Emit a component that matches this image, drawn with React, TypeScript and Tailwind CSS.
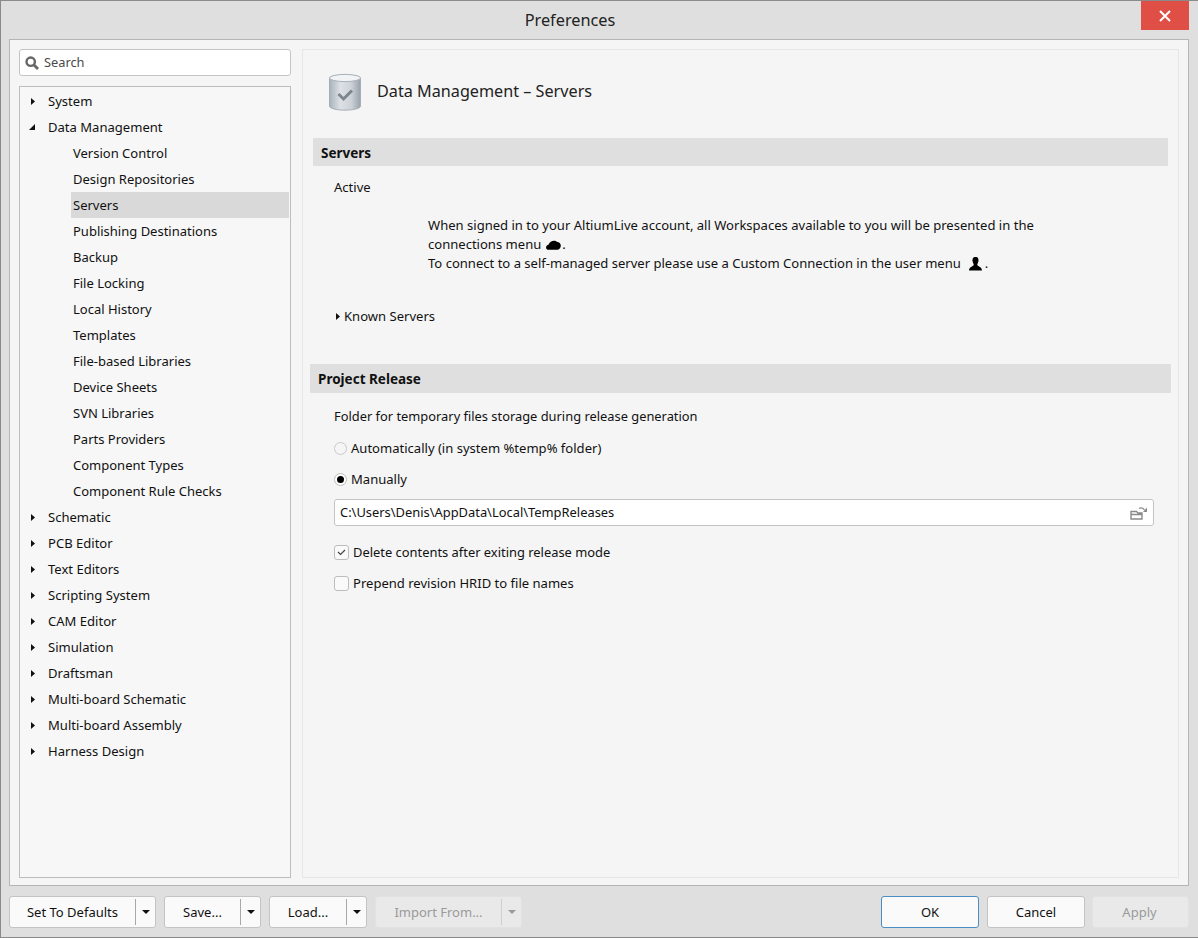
import React from "react";

const font = { fontFamily: '"Noto Sans", "Open Sans", sans-serif' };

function TreeRow({ label, level = 0, arrow, selected }: { label: string; level?: number; arrow?: "right" | "down"; selected?: boolean }) {
  return (
    <div className="flex h-[26px] items-center">
      {level === 0 ? (
        <>
          <span className="flex w-[28px] justify-end pr-[13px]">
            {arrow === "right" ? (
              <svg width="4" height="7" viewBox="0 0 4 7"><path d="M0 0L4 3.5L0 7Z" fill="#111" /></svg>
            ) : (
              <svg width="6" height="6" viewBox="0 0 6 6"><path d="M6 0V6H0Z" fill="#111" /></svg>
            )}
          </span>
          <span className="pt-[1px] text-[13.05px] text-[#111]">{label}</span>
        </>
      ) : (
        <div className={`ml-[51px] flex h-[26px] w-[218px] items-center pl-[2px] pt-[1px] text-[13px] text-[#111] ${selected ? "bg-[#d9d9d9]" : ""}`}>{label}</div>
      )}
    </div>
  );
}

function SplitButton({ label, width, disabled }: { label: string; width: string; disabled?: boolean }) {
  return (
    <div className={`flex h-[32px] items-center rounded-[3px] border ${width} ${disabled ? "border-[#e2e2e2] bg-[#e9e9e9] text-[#9a9a9a]" : "border-[#c4c4c4] bg-[#fafafa] text-[#111]"}`}>
      <span className="flex-1 pt-[1px] text-center text-[13px]">{label}</span>
      <span className={`h-[26px] w-px ${disabled ? "bg-[#cfcfcf]" : "bg-[#a8a8a8]"}`} />
      <span className="flex w-[19px] justify-center">
        <svg width="8" height="4" viewBox="0 0 8 4"><path d="M0 0H8L4 4Z" fill={disabled ? "#9a9a9a" : "#111"} /></svg>
      </span>
    </div>
  );
}

export default function App() {
  const sub = ["Version Control", "Design Repositories", "Servers", "Publishing Destinations", "Backup", "File Locking", "Local History", "Templates", "File-based Libraries", "Device Sheets", "SVN Libraries", "Parts Providers", "Component Types", "Component Rule Checks"];
  const after = ["Schematic", "PCB Editor", "Text Editors", "Scripting System", "CAM Editor", "Simulation", "Draftsman", "Multi-board Schematic", "Multi-board Assembly", "Harness Design"];
  return (
    <div style={font} className="flex h-[938px] w-[1198px] flex-col overflow-hidden border-t border-b border-l border-[#8a8a8a] bg-[#dfdfdf] text-[#111]">
      <div className="flex h-[38px] shrink-0 items-start">
        <div className="flex h-[38px] flex-1 items-center justify-center pr-[2px] text-[16.3px] text-[#222]">Preferences</div>
        <div className="mr-[9px] flex h-[29px] w-[48px] items-center justify-center bg-[#e04f45]">
          <svg width="12" height="12" viewBox="0 0 12 12"><path d="M1 1L11 11M11 1L1 11" stroke="#fff" strokeWidth="2" /></svg>
        </div>
      </div>

      <div className="ml-[8px] mr-[9px] flex h-[847px] shrink-0 gap-[11px] border border-[#b5b5b5] bg-[#f5f5f5] pt-[9px] pr-[9px] pb-[7px] pl-[9px]">
        <div className="flex w-[272px] shrink-0 flex-col gap-[10px]">
          <div className="flex h-[27px] items-center rounded-[3px] border border-[#c4c4c4] bg-white pl-[5px] text-[12.8px] text-[#4a4a4a]">
            <svg width="14" height="14" viewBox="0 0 14 14" className="mr-[5px]">
              <circle cx="5.7" cy="5.7" r="4.2" fill="none" stroke="#666" strokeWidth="2.4" />
              <path d="M9 9L13 13" stroke="#666" strokeWidth="2.8" />
            </svg>
            Search
          </div>
          <div className="flex-1 border border-[#bdbdbd] bg-[#f7f7f7] pt-[1px]">
            <TreeRow label="System" arrow="right" />
            <TreeRow label="Data Management" arrow="down" />
            {sub.map((s) => (
              <TreeRow key={s} label={s} level={1} selected={s === "Servers"} />
            ))}
            {after.map((s) => (
              <TreeRow key={s} label={s} arrow="right" />
            ))}
          </div>
        </div>

        <div className="flex-1 border border-[#e6e6e6] bg-[#f5f5f5] text-[13.05px]">
          <div className="flex h-[88px] items-start pl-[25px] pt-[22px]">
            <svg width="34" height="40" viewBox="0 0 34 40">
              <defs>
                <linearGradient id="cyl" x1="0" x2="1" y1="0" y2="0">
                  <stop offset="0" stopColor="#a9b2bb" />
                  <stop offset="0.35" stopColor="#dde1e6" />
                  <stop offset="0.7" stopColor="#ccd2d8" />
                  <stop offset="1" stopColor="#98a1aa" />
                </linearGradient>
              </defs>
              <path d="M1.5 6C1.5 2.5 32.5 2.5 32.5 6V34C32.5 39.5 1.5 39.5 1.5 34Z" fill="url(#cyl)" stroke="#a6adb4" />
              <ellipse cx="17" cy="6" rx="15.5" ry="3.6" fill="#f1f3f5" stroke="#aab1b8" />
              <path d="M10.5 22L15.5 27L24 18.5" fill="none" stroke="#7d858d" strokeWidth="3" />
            </svg>
            <span className="ml-[15px] mt-[7px] text-[16.2px] text-[#222]">Data Management – Servers</span>
          </div>

          <div className="mx-[10px] flex h-[28px] items-center bg-[#dfdfdf] pl-[8px] pt-[2px] text-[13.5px] font-bold">Servers</div>
          <div className="pl-[31px]">
            <div className="mt-[9px] h-[24px] leading-[24px]">Active</div>
            <div className="mt-[17px] ml-[94px] w-[640px] leading-[19px]">
              <div>When signed in to your AltiumLive account, all Workspaces available to you will be presented in the</div>
              <div className="flex items-center">
                connections menu
                <svg width="15" height="10" viewBox="0 0 14 9" className="ml-[5px] mr-[1px]"><path d="M2.5 9C-1 9 -.5 4.5 2.5 4C3.5 1 8 -1 10.5 1.8C13 1.8 15 5 13 7.5C12 9 10 9 9 9Z" fill="#000" /></svg>
                .
              </div>
              <div className="flex items-center">
                To connect to a self-managed server please use a Custom Connection in the user menu
                <svg width="13" height="14" viewBox="0 0 12 13" className="ml-[8px] mr-[3px]"><path d="M6 0C8.5 0 9 2 8.7 4C8.5 5.5 7.6 6.5 7.6 7.5C8.5 8.8 12 9.2 12 12.5H0C0 9.2 3.5 8.8 4.4 7.5C4.4 6.5 3.5 5.5 3.3 4C3 2 3.5 0 6 0Z" fill="#000" /></svg>
                .
              </div>
            </div>
            <div className="mt-[31px] flex h-[24px] items-center">
              <svg width="4" height="7" viewBox="0 0 4 7" className="ml-[2px] mr-[4px]"><path d="M0 0L4 3.5L0 7Z" fill="#111" /></svg>
              <span className="pt-[1px]">Known Servers</span>
            </div>
          </div>

          <div className="mx-[7px] mt-[36px] flex h-[29px] items-center bg-[#dfdfdf] pl-[8px] pt-[1px] text-[13.5px] font-bold">Project Release</div>

          <div className="pl-[31px] pr-[24px]">
            <div className="mt-[12px] h-[22px] text-[12.87px] leading-[22px]">Folder for temporary files storage during release generation</div>
            <div className="mt-[10px] flex h-[22px] items-center">
              <span className="mr-[4px] h-[13px] w-[13px] rounded-full border border-[#c9c9c9] bg-[#f5f5f5]" />
              <span className="pt-[1px]">Automatically (in system %temp% folder)</span>
            </div>
            <div className="mt-[9px] flex h-[22px] items-center">
              <span className="mr-[4px] flex h-[13px] w-[13px] items-center justify-center rounded-full border border-[#bdbdbd] bg-white">
                <span className="h-[7px] w-[7px] rounded-full bg-black" />
              </span>
              <span className="pt-[1px]">Manually</span>
            </div>
            <div className="mt-[9px] flex h-[27px] items-center justify-between rounded-[3px] border border-[#c4c4c4] bg-white pl-[5px] pr-[5px] text-[12.9px]">
              C:\Users\Denis\AppData\Local\TempReleases
              <svg width="18" height="14" viewBox="0 0 18 14">
                <path d="M1 5.5H6.5L8 7H12V13H1ZM1 8.5H12" fill="none" stroke="#8a8a8a" strokeWidth="1.4" />
                <path d="M9 2.5C11 1.5 13 2 14.5 4" fill="none" stroke="#8a8a8a" strokeWidth="1.2" />
                <path d="M17 1.5V6H13Z" fill="#8a8a8a" />
              </svg>
            </div>
            <div className="mt-[15px] flex h-[22px] items-center text-[12.9px]">
              <span className="mr-[4px] flex h-[15px] w-[15px] items-center justify-center rounded-[3px] border border-[#bdbdbd] bg-[#fafafa]">
                <svg width="9" height="7" viewBox="0 0 9 7"><path d="M1 3L3.5 5.5L8 1" fill="none" stroke="#444" strokeWidth="1.2" /></svg>
              </span>
              <span className="pt-[1px]">Delete contents after exiting release mode</span>
            </div>
            <div className="mt-[9px] flex h-[22px] items-center">
              <span className="mr-[4px] h-[15px] w-[15px] rounded-[3px] border border-[#bdbdbd] bg-[#fafafa]" />
              <span className="pt-[1px]">Prepend revision HRID to file names</span>
            </div>
          </div>
        </div>
      </div>

      <div className="ml-[8px] mr-[9px] mt-[10px] flex items-start justify-between">
        <div className="flex gap-[8px]">
          <SplitButton label="Set To Defaults" width="w-[147px]" />
          <SplitButton label="Save..." width="w-[97px]" />
          <SplitButton label="Load..." width="w-[98px]" />
          <SplitButton label="Import From..." width="w-[147px]" disabled />
        </div>
        <div className="flex text-[13px]">
          <div className="flex h-[32px] w-[98px] items-center justify-center rounded-[3px] border border-[#4a8ec2] bg-[#fafafa] pt-[1px]">OK</div>
          <div className="ml-[8px] flex h-[32px] w-[98px] items-center justify-center rounded-[3px] border border-[#c4c4c4] bg-[#fafafa] pt-[1px]">Cancel</div>
          <div className="ml-[7px] flex h-[32px] w-[97px] items-center justify-center rounded-[3px] border border-[#e2e2e2] bg-[#e9e9e9] pt-[1px] pr-[2px] text-[#9a9a9a]">Apply</div>
        </div>
      </div>
    </div>
  );
}
